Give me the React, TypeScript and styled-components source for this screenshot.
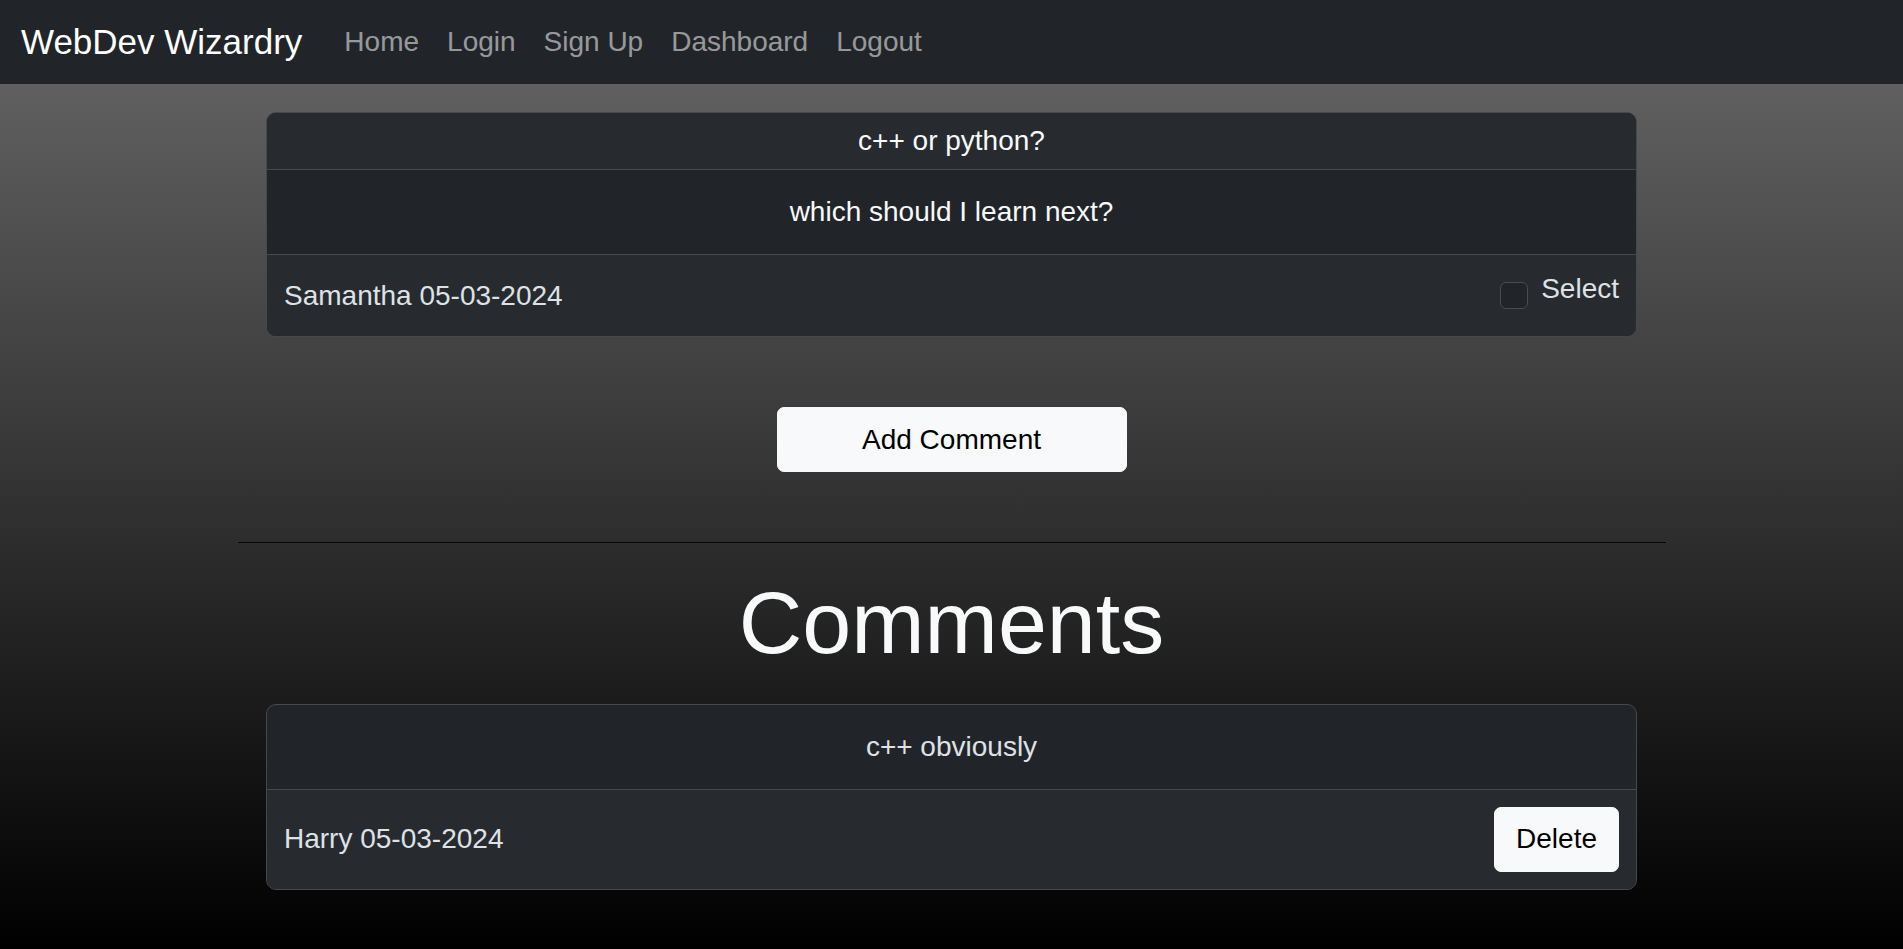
import React from 'react'
import styled, { createGlobalStyle } from 'styled-components'

const GlobalStyle = createGlobalStyle`
  html, body {
    margin: 0;
    padding: 0;
  }
  body {
    font-family: 'Liberation Sans', Arial, sans-serif;
    background: #000;
  }
  * {
    box-sizing: border-box;
  }
`

const Page = styled.div`
  min-height: 100vh;
  background: linear-gradient(to bottom, dimgray, black);
  padding-bottom: 40px;
`

const Navbar = styled.nav`
  height: 84px;
  padding: 0 21px;
  display: flex;
  align-items: center;
  background: #212529;
`

const Brand = styled.a`
  font-size: 35px;
  line-height: 52px;
  color: #fff;
  margin-right: 28px;
  text-decoration: none;
`

const NavLink = styled.a`
  font-size: 28px;
  line-height: 42px;
  padding: 0 14px;
  color: rgba(255, 255, 255, 0.55);
  text-decoration: none;
`

const Main = styled.main`
  width: 1428px;
  margin: 0 auto;
  padding-top: 28px;
  display: flex;
  flex-direction: column;
  align-items: center;
`

const Card = styled.div`
  width: 1371px;
  background: #212529;
  border: 1px solid #45494e;
  border-radius: 10px;
  overflow: hidden;
  color: #dee2e6;
`

const CardHeader = styled.div`
  padding: 7px 17px;
  font-size: 28px;
  line-height: 42px;
  text-align: center;
  color: #f8f9fa;
  background: #272b2f;
  border-bottom: 1px solid #45494e;
`

const CardBody = styled.div<{ $bright?: boolean }>`
  padding: 21px 17px;
  font-size: 28px;
  line-height: 42px;
  text-align: center;
  color: ${p => (p.$bright ? '#f8f9fa' : '#dee2e6')};
`

const CardFooter = styled.div`
  padding: 17px;
  min-height: 82px;
  display: flex;
  align-items: center;
  justify-content: space-between;
  background: #272b2f;
  border-top: 1px solid #45494e;
  font-size: 28px;
  line-height: 42px;
`

const FormCheck = styled.label`
  height: 42px;
  display: flex;
  align-items: flex-start;
  gap: 13px;
  cursor: pointer;
`

const CheckBox = styled.input`
  appearance: none;
  margin: 7px 0 0;
  width: 28px;
  height: 27px;
  border: 1px solid #494d52;
  border-radius: 6px;
  background: #212529;
`

const CheckLabel = styled.span`
  margin-top: -7px;
  color: #dee2e6;
`

const LightButton = styled.button<{ $wide?: boolean }>`
  font-family: inherit;
  font-size: 28px;
  line-height: 42px;
  padding: 10.5px 21px;
  width: ${p => (p.$wide ? '350px' : 'auto')};
  color: #000;
  background: #f8f9fa;
  border: 1px solid #f8f9fa;
  border-radius: 7px;
  cursor: pointer;
`

const AddRow = styled.div`
  margin-top: 70px;
`

const Divider = styled.hr`
  width: 100%;
  margin: 70px 0 0;
  border: 0;
  border-top: 1px solid rgba(0, 0, 0, 0.85);
`

const Heading = styled.h1`
  margin: 27px 0 28px;
  font-size: 88px;
  font-weight: 400;
  line-height: 1.2;
  color: #f8f9fa;
`

export default function App() {
  return (
    <>
      <GlobalStyle />
      <Page>
        <Navbar>
          <Brand href="#">WebDev Wizardry</Brand>
          <NavLink href="#">Home</NavLink>
          <NavLink href="#">Login</NavLink>
          <NavLink href="#">Sign Up</NavLink>
          <NavLink href="#">Dashboard</NavLink>
          <NavLink href="#">Logout</NavLink>
        </Navbar>
        <Main>
          <Card>
            <CardHeader>c++ or python?</CardHeader>
            <CardBody $bright>which should I learn next?</CardBody>
            <CardFooter>
              <span>Samantha 05-03-2024</span>
              <FormCheck>
                <CheckBox type="checkbox" />
                <CheckLabel>Select</CheckLabel>
              </FormCheck>
            </CardFooter>
          </Card>
          <AddRow>
            <LightButton $wide>Add Comment</LightButton>
          </AddRow>
          <Divider />
          <Heading>Comments</Heading>
          <Card>
            <CardBody>c++ obviously</CardBody>
            <CardFooter>
              <span>Harry 05-03-2024</span>
              <LightButton>Delete</LightButton>
            </CardFooter>
          </Card>
        </Main>
      </Page>
    </>
  )
}
